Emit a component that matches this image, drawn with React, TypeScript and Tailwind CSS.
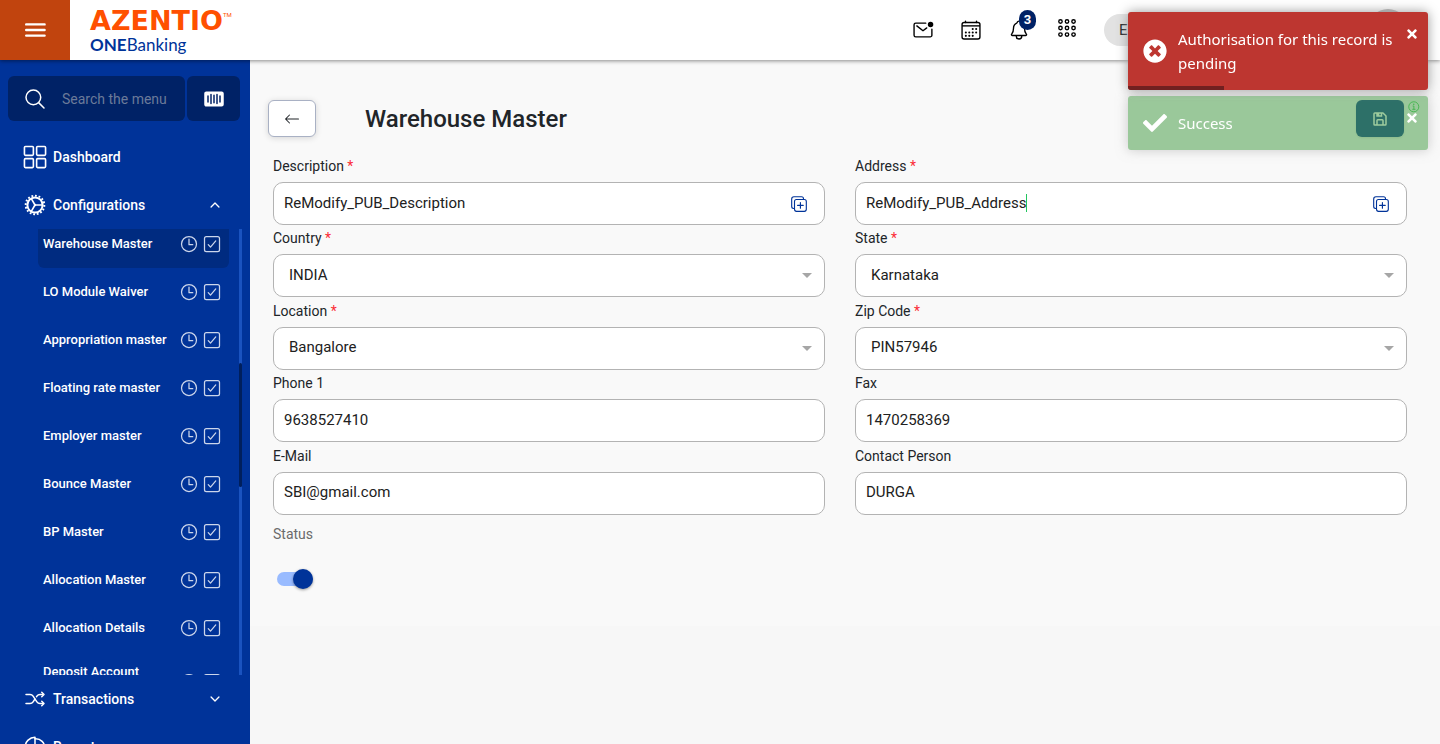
import type { ReactNode } from "react";
import {
  IoAppsOutline,
  IoBarcode,
  IoCalendarOutline,
  IoCheckboxOutline,
  IoChevronDown,
  IoChevronUp,
  IoDuplicateOutline,
  IoGridOutline,
  IoInformationCircleOutline,
  IoMailUnreadOutline,
  IoNotificationsOutline,
  IoPieChartOutline,
  IoSearchOutline,
  IoShuffleOutline,
  IoTimeOutline,
} from "react-icons/io5";
import { BsArrowLeft } from "react-icons/bs";
import { BiSave } from "react-icons/bi";
import { FaCheck, FaTimes, FaTimesCircle } from "react-icons/fa";

const configurationItems = [
  "Warehouse Master",
  "LO Module Waiver",
  "Appropriation master",
  "Floating rate master",
  "Employer master",
  "Bounce Master",
  "BP Master",
  "Allocation Master",
  "Allocation Details",
  "Deposit Account Master",
];

type FieldData = {
  id: string;
  label: string;
  value: string;
  kind: "text" | "copy" | "select";
  required?: boolean;
  caret?: boolean;
};

const fields: FieldData[] = [
  { id: "description", label: "Description", value: "ReModify_PUB_Description", kind: "copy", required: true },
  { id: "address", label: "Address", value: "ReModify_PUB_Address", kind: "copy", required: true, caret: true },
  { id: "country", label: "Country", value: "INDIA", kind: "select", required: true },
  { id: "state", label: "State", value: "Karnataka", kind: "select", required: true },
  { id: "location", label: "Location", value: "Bangalore", kind: "select", required: true },
  { id: "zip", label: "Zip Code", value: "PIN57946", kind: "select", required: true },
  { id: "phone", label: "Phone 1", value: "9638527410", kind: "text" },
  { id: "fax", label: "Fax", value: "1470258369", kind: "text" },
  { id: "email", label: "E-Mail", value: "SBI@gmail.com", kind: "text" },
  { id: "contact", label: "Contact Person", value: "DURGA", kind: "text" },
];

function CogIcon() {
  return (
    <svg viewBox="0 0 22 22" className="size-[22px] shrink-0" fill="none" stroke="#fff" aria-hidden="true">
      <circle cx="11" cy="11" r="7.6" strokeWidth="2" />
      <circle cx="11" cy="11" r="9.3" strokeWidth="2" pathLength="64" strokeDasharray="2 2" />
      <path d="M11 11h7.4M11 11 7.3 4.6M11 11l-3.7 6.4" strokeWidth="1.6" />
      <circle cx="11" cy="11" r="1.2" fill="#fff" stroke="none" />
    </svg>
  );
}

function Field({ field }: { field: FieldData }) {
  return (
    <div className="min-w-0">
      <label htmlFor={field.id} className="mb-[5px] block text-sm leading-[22px] text-[#212529]">
        {field.label}
        {field.required && <span className="text-red-500"> *</span>}
      </label>
      <div className="relative flex h-[43px] items-center overflow-hidden rounded-[10px] border border-[#b3b3b3] bg-white text-[15px] text-[#212121]">
        {field.kind === "select" ? (
          <>
            <select id={field.id} defaultValue={field.value} className="h-full w-full appearance-none bg-transparent pb-0.5 pl-[15px] outline-none">
              <option>{field.value}</option>
            </select>
            <svg viewBox="0 0 10 5" className="pointer-events-none absolute right-3 h-[5px] w-2.5 fill-[#a6a6a6]" aria-hidden="true">
              <path d="M0 0h10L5 5z" />
            </svg>
          </>
        ) : (
          <>
            <input
              id={field.id}
              defaultValue={field.value}
              className={
                field.caret
                  ? "h-full pb-0.5 pl-2.5 outline-none [field-sizing:content]"
                  : "h-full min-w-0 flex-1 pb-0.5 pl-2.5 outline-none"
              }
            />
            {field.caret && <span className="mb-0.5 h-[18px] w-px bg-[#22c55e]" />}
            {field.kind === "copy" && (
              <button type="button" aria-label={"Expand " + field.label} className="mr-4 ml-auto text-[#003399]">
                <IoDuplicateOutline className="size-[18px]" />
              </button>
            )}
          </>
        )}
      </div>
    </div>
  );
}

function MenuItem({ icon, label, chevron }: { icon: ReactNode; label: string; chevron?: ReactNode }) {
  return (
    <button type="button" className="flex h-12 w-full shrink-0 items-center pr-7 pl-6 text-left text-sm font-medium text-white">
      <span className="mr-[7px] flex w-[22px] justify-center">{icon}</span>
      <span className="flex-1">{label}</span>
      {chevron}
    </button>
  );
}

function Sidebar() {
  return (
    <aside className="flex w-[250px] shrink-0 flex-col overflow-hidden bg-[#003399] pt-4">
      <div className="mb-3 ml-2 flex shrink-0 gap-0.5 pr-2.5">
        <label className="flex h-[45px] min-w-0 flex-1 items-center rounded-md bg-[#002266] pl-[15px]">
          <IoSearchOutline className="size-6 shrink-0 text-white" />
          <input type="text" aria-label="Search the menu" placeholder="Search the menu" className="ml-[15px] w-full min-w-0 text-sm outline-none placeholder:text-[#6b7a99]" />
        </label>
        <button type="button" aria-label="Scan" className="flex w-[53px] items-center justify-center rounded-md bg-[#002266] text-white">
          <IoBarcode className="size-6" />
        </button>
      </div>
      <nav className="flex min-h-0 flex-1 flex-col">
        <MenuItem icon={<IoGridOutline className="size-[26px] shrink-0" />} label="Dashboard" />
        <MenuItem icon={<CogIcon />} label="Configurations" chevron={<IoChevronUp className="size-3.5" />} />
        <div className="relative h-[60vh] shrink-0 overflow-hidden">
          <ul className="-mt-[9px] mr-[21px] ml-[38px]">
            {configurationItems.map((item, index) => (
              <li key={item}>
                <a
                  href="#"
                  className={
                    index === 0
                      ? "flex h-12 items-center gap-1.5 rounded-md bg-[#002b80] pr-2 pl-[5px] text-[13px] leading-5 font-medium text-white"
                      : index === configurationItems.length - 1
                        ? "flex h-[60px] items-center gap-1.5 pr-2 pl-[5px] text-[13px] leading-5 font-medium text-white"
                        : "flex h-12 items-center gap-1.5 pr-2 pl-[5px] text-[13px] leading-5 font-medium text-white"
                  }
                >
                  <span className="w-[132px]">{item}</span>
                  <span className="ml-auto flex gap-[3px] text-[#ccd6eb]">
                    <IoTimeOutline className="size-5" />
                    <IoCheckboxOutline className="-mr-px size-5" />
                  </span>
                </a>
              </li>
            ))}
          </ul>
          <div className="absolute inset-y-0 right-2 w-[3px] bg-[#1a53bf] pt-[134px]">
            <div className="h-[124px] rounded-full bg-[#001f5c]" />
          </div>
        </div>
        <MenuItem icon={<IoShuffleOutline className="size-6 shrink-0" />} label="Transactions" chevron={<IoChevronDown className="size-3.5" />} />
        <MenuItem icon={<IoPieChartOutline className="size-6 shrink-0" />} label="Reports" chevron={<IoChevronDown className="size-3.5" />} />
      </nav>
    </aside>
  );
}

function Header() {
  return (
    <header className="relative z-10 flex h-[60px] shrink-0 items-center bg-white shadow-[0_1px_4px_rgba(0,0,0,0.45)]">
      <button type="button" aria-label="Toggle menu" className="flex h-full w-[70px] items-center justify-center bg-[#c1440e]">
        <svg viewBox="0 0 22 14" className="h-3.5 w-[22px]" fill="none" stroke="#fff" strokeWidth="2.4" strokeLinecap="round" aria-hidden="true">
          <path d="M2.2 1.4h18.4M2.2 7h18.4M2.2 12.6h18.4" />
        </svg>
      </button>
      <a href="#" className="ml-5 flex flex-col pt-0.5" aria-label="Azentio ONEBanking">
        <span className="flex items-start text-[#ff5000]">
          <span className="font-['DejaVu_Sans',sans-serif] text-[27px] leading-7 font-bold">AZENTIO</span>
          <span className="mt-1 font-[Roboto,sans-serif] text-[6px] leading-2">TM</span>
        </span>
        <span className="font-[Lato,sans-serif] text-[17px] leading-5 text-[#003399]">
          <b>ONE</b>Banking
        </span>
      </a>
      <div className="ml-auto flex items-center text-black">
        <button type="button" aria-label="Messages" className="mr-[26px]">
          <IoMailUnreadOutline className="size-[22px]" />
        </button>
        <button type="button" aria-label="Calendar" className="mr-[26px]">
          <IoCalendarOutline className="size-[22px]" />
        </button>
        <button type="button" aria-label="Notifications" className="relative mr-[26px]">
          <IoNotificationsOutline className="size-[22px]" />
          <span className="absolute -top-[9px] left-[11px] flex h-5 w-[17px] items-center justify-center rounded-full bg-[#002266] text-[13px] font-bold text-white">3</span>
        </button>
        <button type="button" aria-label="Applications" className="mr-[26px] pb-1">
          <IoAppsOutline className="size-[22px]" />
        </button>
        <button type="button" className="mr-[35px] flex h-8 w-[301px] items-center rounded-full bg-[#e2e2e2] pl-[15px] text-[15px] text-[#212529]">E</button>
      </div>
      <span className="absolute top-[9px] right-8 size-10 rounded-full bg-[#b3b3b3]" />
    </header>
  );
}

function Toasts() {
  return (
    <div className="fixed top-3 right-3 z-20 flex w-[300px] flex-col gap-1.5 font-['Noto_Sans',sans-serif] text-[15px] leading-6 text-white">
      <div role="alert" className="relative flex items-center overflow-hidden rounded-[3px] bg-[#bd3630] py-[15px] pl-[15px] shadow-[0_0_12px_#999]">
        <FaTimesCircle className="size-6 shrink-0" />
        <p className="ml-[11px] flex-1">Authorisation for this record is pending</p>
        <button type="button" aria-label="Close error" className="mr-[9px] mb-[34px]">
          <FaTimes className="size-3.5" />
        </button>
        <span className="absolute bottom-0 left-0 h-1 w-24 bg-[#712020]" />
      </div>
      <div role="status" className="flex items-center rounded-[3px] bg-[#51a351]/56 py-[15px] pl-[15px] shadow-[0_0_12px_rgba(153,153,153,0.5)]">
        <FaCheck className="size-6 shrink-0" />
        <p className="ml-[11px] flex-1">Success</p>
        <button type="button" aria-label="Close success" className="mr-[9px] mb-2.5">
          <FaTimes className="size-3.5" />
        </button>
      </div>
    </div>
  );
}

export default function App() {
  return (
    <div className="flex h-screen flex-col bg-[#f7f7f7] font-[Roboto,sans-serif]">
      <Header />
      <div className="flex min-h-0 flex-1">
        <Sidebar />
        <main className="min-w-0 flex-1">
          <div className="bg-[#f9f9f9] pt-10 pr-[33px] pb-10 pl-[23px]">
            <div className="-ml-[5px] flex h-[37px] items-center">
              <button type="button" aria-label="Back" className="flex h-[37px] w-12 items-center justify-center rounded-md border border-[#a9b1c4] bg-white text-[#212529] shadow-[0_1px_6px_rgba(0,0,0,0.15)]">
                <BsArrowLeft className="size-4" />
              </button>
              <h1 className="ml-[49px] text-2xl leading-8 font-medium text-[#212529]">Warehouse Master</h1>
              <div className="ml-auto flex self-start">
                <button type="button" aria-label="Save" className="flex h-[37px] w-12 items-center justify-center rounded-md bg-[#003087] text-white shadow-sm">
                  <BiSave className="size-[18px]" />
                </button>
                <IoInformationCircleOutline className="-mr-3.5 ml-[3px] size-3.5 text-[#28c840]" />
              </div>
            </div>
            <form className="mt-[18px] grid min-h-[362px] auto-rows-fr grid-cols-2 gap-x-[30px]">
              {fields.map((field) => (
                <Field key={field.id} field={field} />
              ))}
            </form>
            <div className="mt-1.5 flex flex-col items-start">
              <label htmlFor="status" className="text-sm leading-[22px] text-[#6b6b6b]">
                Status
              </label>
              <input
                id="status"
                type="checkbox"
                role="switch"
                defaultChecked
                className="relative mt-[27px] ml-1 h-3.5 w-9 appearance-none rounded-full bg-[#99bbff] before:absolute before:-top-[3px] before:right-0 before:size-5 before:rounded-full before:bg-[#003399] before:shadow-[0_1px_3px_rgba(0,0,0,0.4)] before:content-['']"
              />
            </div>
          </div>
        </main>
      </div>
      <Toasts />
    </div>
  );
}
